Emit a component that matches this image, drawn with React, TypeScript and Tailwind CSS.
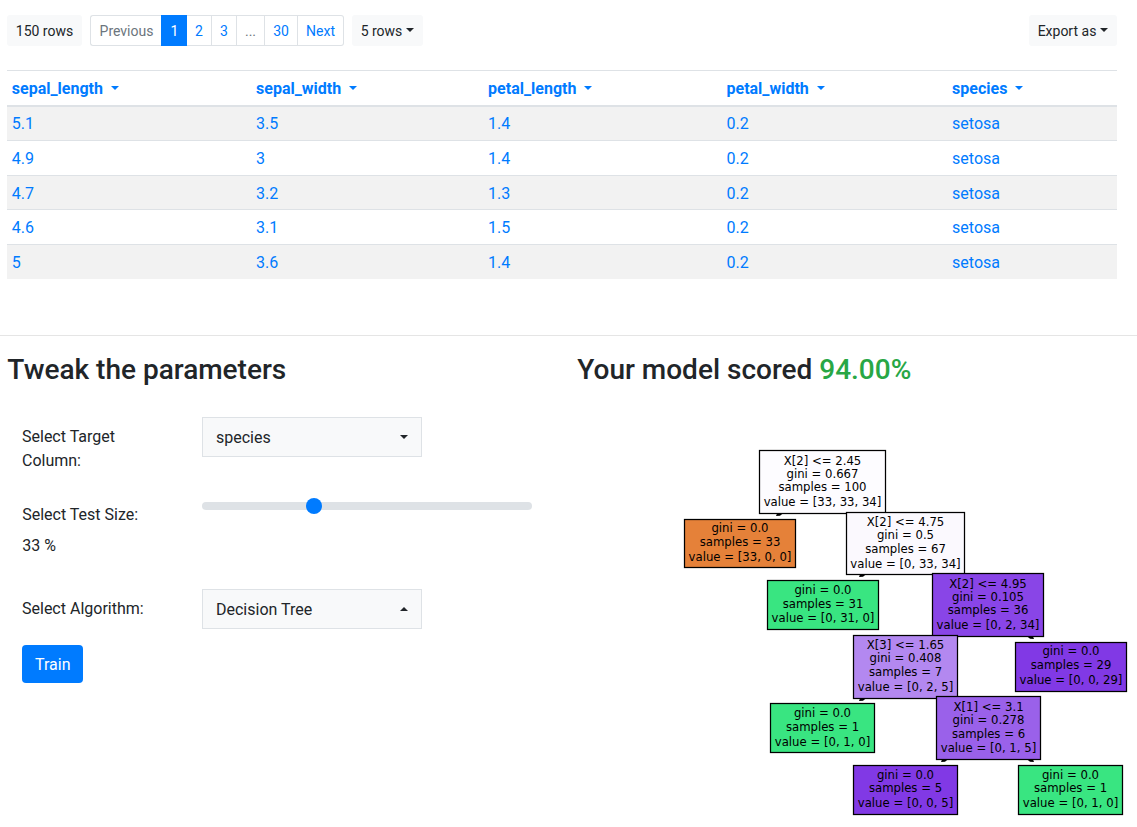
import { useState } from "react";

const columns = [
  { name: "sepal_length", width: "w-[244.3px]" },
  { name: "sepal_width", width: "w-[232px]" },
  { name: "petal_length", width: "w-[238.4px]" },
  { name: "petal_width", width: "w-[225.6px]" },
  { name: "species", width: "w-[169.7px]" },
];

const rows = [
  ["5.1", "3.5", "1.4", "0.2", "setosa"],
  ["4.9", "3", "1.4", "0.2", "setosa"],
  ["4.7", "3.2", "1.3", "0.2", "setosa"],
  ["4.6", "3.1", "1.5", "0.2", "setosa"],
  ["5", "3.6", "1.4", "0.2", "setosa"],
];

type TreeNode = {
  x: number;
  y: number;
  w: number;
  h: number;
  fill: string;
  lines: [string, number][];
};

const nodes: TreeNode[] = [
  { x: 759.5, y: 450.5, w: 126, h: 63, fill: "#fdfcff", lines: [["X[2] <= 2.45", 465], ["gini = 0.667", 478], ["samples = 100", 491], ["value = [33, 33, 34]", 506]] },
  { x: 684.5, y: 519.5, w: 111, h: 48, fill: "#e58139", lines: [["gini = 0.0", 532], ["samples = 33", 546], ["value = [33, 0, 0]", 561]] },
  { x: 846.5, y: 512.5, w: 118, h: 62, fill: "#fbf9fe", lines: [["X[2] <= 4.75", 526], ["gini = 0.5", 539], ["samples = 67", 553], ["value = [0, 33, 34]", 568]] },
  { x: 767.5, y: 580.5, w: 111, h: 49, fill: "#39e581", lines: [["gini = 0.0", 594], ["samples = 31", 608], ["value = [0, 31, 0]", 622]] },
  { x: 932.5, y: 573.5, w: 111, h: 63, fill: "#8945e7", lines: [["X[2] <= 4.95", 588], ["gini = 0.105", 601], ["samples = 36", 614], ["value = [0, 2, 34]", 629]] },
  { x: 853.5, y: 635.5, w: 104, h: 63, fill: "#b388f0", lines: [["X[3] <= 1.65", 649], ["gini = 0.408", 662], ["samples = 7", 676], ["value = [0, 2, 5]", 691]] },
  { x: 770.5, y: 703.5, w: 104, h: 49, fill: "#39e581", lines: [["gini = 0.0", 717], ["samples = 1", 731], ["value = [0, 1, 0]", 746]] },
  { x: 936.5, y: 696.5, w: 104, h: 63, fill: "#9a61ea", lines: [["X[1] <= 3.1", 711], ["gini = 0.278", 724], ["samples = 6", 738], ["value = [0, 1, 5]", 752]] },
  { x: 853.5, y: 765.5, w: 104, h: 49, fill: "#8139e5", lines: [["gini = 0.0", 779], ["samples = 5", 792], ["value = [0, 0, 5]", 807]] },
  { x: 1018.5, y: 765.5, w: 104, h: 49, fill: "#39e581", lines: [["gini = 0.0", 779], ["samples = 1", 792], ["value = [0, 1, 0]", 807]] },
  { x: 1015.5, y: 642.5, w: 111, h: 49, fill: "#8139e5", lines: [["gini = 0.0", 655], ["samples = 29", 669], ["value = [0, 0, 29]", 684]] },
];

const arrows = [
  { x: 776, y: 514, left: true },
  { x: 859, y: 575, left: true },
  { x: 1034, y: 637, left: false },
  { x: 859, y: 699, left: true },
  { x: 941, y: 760, left: true },
  { x: 1034, y: 760, left: false },
];

function DownCaret({ className = "" }: { className?: string }) {
  return <span className={`inline-block border-x-4 border-t-4 border-x-transparent border-t-current ${className}`} />;
}

function DecisionTree() {
  return (
    <svg className="block h-[400px] w-[460px]" viewBox="677 427 460 400" role="img">
      {arrows.map((a) => (
        <path
          key={`${a.x}-${a.y}`}
          d={a.left ? `M${a.x} ${a.y + 1.9}L${a.x + 1.2} ${a.y - 1}H${a.x + 7.5}L${a.x + 4} ${a.y + 1.7}Z` : `M${a.x} ${a.y + 1.9}L${a.x - 1.2} ${a.y - 1}H${a.x - 7.5}L${a.x - 4} ${a.y + 1.7}Z`}
        />
      ))}
      {nodes.map((n) => (
        <g key={`${n.x}-${n.y}`}>
          <rect x={n.x} y={n.y} width={n.w} height={n.h} fill={n.fill} stroke="#000" strokeWidth="1.25" />
          {n.lines.map(([text, y]) => (
            <text key={text} x={n.x + n.w / 2} y={y} textAnchor="middle" className="font-['DejaVu_Sans',sans-serif] text-[11.7px]">
              {text}
            </text>
          ))}
        </g>
      ))}
    </svg>
  );
}

export default function App() {
  const [size, setSize] = useState(33);
  const page = "flex items-center justify-center border-y border-r border-[#dee2e6]";
  return (
    <div className="h-[827px] w-[1137px] overflow-hidden bg-white font-[Roboto,sans-serif] text-base text-[#212529]">
      <section className="flex h-[336px] flex-col border-b border-[#e5e5e5] pl-[7px] pr-5 pt-[15px]">
        <div className="flex h-[31px] text-sm">
          <div className="mr-2 flex w-[75px] items-center justify-center rounded-[3px] bg-[#f8f9fa]">150 rows</div>
          <nav className="mr-2 flex text-[#007bff]">
            <button className="flex w-[71px] items-center justify-center rounded-l-[3px] border-y border-l border-[#dee2e6] pl-px text-[#6c757d]">Previous</button>
            <button className="flex w-[26px] items-center justify-center bg-[#007bff] pl-px text-white">1</button>
            <button className={`${page} w-[25px]`}>2</button>
            <button className={`${page} w-[25px]`}>3</button>
            <button className={`${page} w-7 text-[#6c757d]`}>...</button>
            <button className={`${page} w-[33px]`}>30</button>
            <button className={`${page} w-[46px] rounded-r-[3px]`}>Next</button>
          </nav>
          <button className="flex w-[71px] items-center justify-center gap-1 rounded-[3px] bg-[#f8f9fa]">5 rows<DownCaret className="-mt-px" /></button>
          <button className="ml-auto flex w-[88px] items-center justify-center gap-1 rounded-[3px] bg-[#f8f9fa]">Export as<DownCaret className="-mt-px" /></button>
        </div>
        <table className="mt-6 w-[1110px] table-fixed border-collapse text-left text-[#007bff]">
          <thead>
            <tr>
              {columns.map((c) => (
                <th key={c.name} className={`${c.width} border-b-2 border-t border-[#dee2e6] px-[4.8px] pb-[3.8px] pt-[5.8px] font-bold`}>
                  {c.name}
                  <DownCaret className="ml-2 align-[4px]" />
                </th>
              ))}
            </tr>
          </thead>
          <tbody>
            {rows.map((r) => (
              <tr key={r[0]} className="odd:bg-[#f2f2f2]">
                {r.map((v, i) => (
                  <td key={i} className="border-t border-[#dee2e6] px-[4.8px] pb-[3.8px] pt-[5.8px]">{v}</td>
                ))}
              </tr>
            ))}
          </tbody>
        </table>
      </section>
      <main className="flex">
        <section className="w-[569px] pl-[7px] pt-[17px]">
          <h2 className="pl-[0.3px] text-[28px] font-medium leading-[34px]">Tweak the parameters</h2>
          <div className="mt-[30px] flex h-[78px] pl-[15px]">
            <label className="w-[180px] pr-16 pt-2">Select Target Column:</label>
            <button className="flex h-10 w-[220px] items-center justify-between border border-[#dee2e6] bg-[#f8f9fa] px-[13px]"><span className="pt-0.5">species</span><DownCaret className="-mt-px" /></button>
          </div>
          <div className="flex h-[94px] pl-[15px]">
            <div className="w-[180px] pl-[0.2px] pt-2">
              <label>Select Test Size:</label>
              <p className="mt-[7px]">{size} %</p>
            </div>
            <input
              type="range"
              min={0}
              max={100}
              value={size}
              onChange={(e) => setSize(Number(e.target.value))}
              className="mt-[3px] h-4 w-[330px] appearance-none bg-transparent [&::-webkit-slider-runnable-track]:h-2 [&::-webkit-slider-runnable-track]:rounded-full [&::-webkit-slider-runnable-track]:bg-[#dee2e6] [&::-webkit-slider-thumb]:-mt-1 [&::-webkit-slider-thumb]:size-4 [&::-webkit-slider-thumb]:appearance-none [&::-webkit-slider-thumb]:rounded-full [&::-webkit-slider-thumb]:bg-[#007bff]"
            />
          </div>
          <div className="flex h-14 pl-[15px]">
            <label className="w-[180px] pt-2">Select Algorithm:</label>
            <button className="flex h-10 w-[220px] items-center justify-between border border-[#dee2e6] bg-[#f8f9fa] px-[13px]">
              <span className="pt-0.5">Decision Tree</span>
              <span className="inline-block border-x-4 border-b-4 border-x-transparent border-b-current" />
            </button>
          </div>
          <button className="ml-[15px] h-[38px] w-[61px] rounded bg-[#007bff] pl-[0.5px] pt-0.5 text-white">Train</button>
        </section>
        <section className="w-[568px] pt-[17px]">
          <h2 className="pl-[8.3px] text-[28px] font-medium leading-[34px]">
            Your model scored <span className="text-[#28a745]">94.00%</span>
          </h2>
          <div className="mt-10 pl-[108px]">
            <DecisionTree />
          </div>
        </section>
      </main>
    </div>
  );
}
